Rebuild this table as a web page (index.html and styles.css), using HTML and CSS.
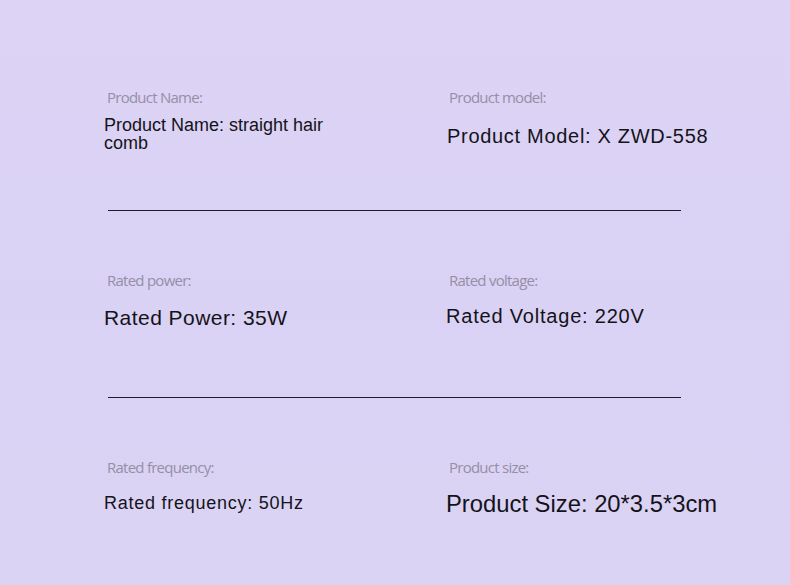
FILE: index.html
```html
<!DOCTYPE html>
<html>
<head>
<meta charset="utf-8">
<link rel="stylesheet" href="styles.css">
</head>
<body>
<div class="page">
  <div class="row row1">
    <div class="cell">
      <div class="label">Product Name:</div>
      <div class="value v-name">Product Name: straight hair comb</div>
    </div>
    <div class="cell">
      <div class="label">Product model:</div>
      <div class="value v-model">Product Model: X ZWD-558</div>
    </div>
  </div>
  <div class="rule"></div>
  <div class="row row2">
    <div class="cell">
      <div class="label">Rated power:</div>
      <div class="value v-power">Rated Power: 35W</div>
    </div>
    <div class="cell">
      <div class="label">Rated voltage:</div>
      <div class="value v-voltage">Rated Voltage: 220V</div>
    </div>
  </div>
  <div class="rule"></div>
  <div class="row row3">
    <div class="cell">
      <div class="label">Rated frequency:</div>
      <div class="value v-freq">Rated frequency: 50Hz</div>
    </div>
    <div class="cell">
      <div class="label">Product size:</div>
      <div class="value v-size">Product Size: 20*3.5*3cm</div>
    </div>
  </div>
</div>
</body>
</html>
```
FILE: styles.css
```css
html, body {
  margin: 0;
  padding: 0;
}
body {
  width: 790px;
  height: 585px;
  overflow: hidden;
  background: linear-gradient(180deg, #dcd3f5 0%, #dad2f4 50%, #dbd3f4 100%);
}
.page {
  padding: 88px 0 0 104px;
}
.row {
  display: grid;
  grid-template-columns: 342px 1fr;
}
.row1 { height: 122px; }
.row2 { height: 126px; }
.row3 { height: 120px; }
.rule {
  margin-left: 4px;
  width: 573px;
  border-top: 1px solid #1e1b24;
  margin-bottom: 60px;
}
.cell {
  display: flex;
  flex-direction: column;
}
.label {
  font-family: "Open Sans", sans-serif;
  font-size: 15px;
  line-height: 18px;
  letter-spacing: -0.75px;
  color: #958fa6;
  padding-left: 3px;
}
.value {
  font-family: "Liberation Sans", Arial, sans-serif;
  color: #15131a;
}
.v-name {
  font-size: 18px;
  line-height: 18px;
  margin-top: 10px;
  width: 236px;
}
.v-model {
  font-size: 20px;
  line-height: 24px;
  letter-spacing: 0.7px;
  margin-top: 18px;
  padding-left: 1px;
}
.v-power {
  font-size: 21px;
  line-height: 24px;
  letter-spacing: 0.45px;
  margin-top: 17px;
}
.v-voltage {
  font-size: 20px;
  line-height: 24px;
  letter-spacing: 0.8px;
  margin-top: 15px;
}
.v-freq {
  font-size: 18px;
  line-height: 24px;
  letter-spacing: 0.75px;
  margin-top: 15px;
}
.v-size {
  font-size: 23.8px;
  line-height: 26px;
  margin-top: 15px;
}
```
